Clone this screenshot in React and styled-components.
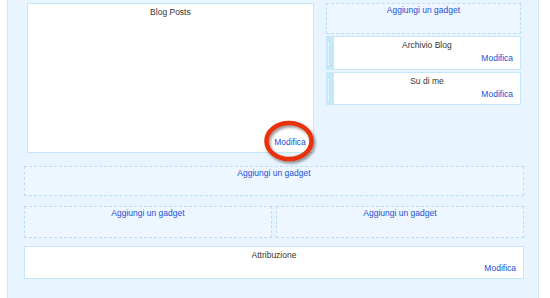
import React from "react";
import styled, { createGlobalStyle } from "styled-components";

const Global = createGlobalStyle`
  body {
    margin: 0;
    background: #ffffff;
    font-family: "Liberation Sans", Arial, sans-serif;
  }
`;

const Panel = styled.div`
  margin-left: 7px;
  width: 532px;
  height: 298px;
  box-sizing: border-box;
  background: #e8f4fe;
  border-left: 1px solid #cfe6f7;
  border-right: 1px solid #cfe6f7;
  padding: 3px 14px 0 16px;
  display: flex;
  flex-direction: column;
  overflow: hidden;
`;

const TopRow = styled.div`
  display: flex;
  padding: 0 3px;
  gap: 12px;
  position: relative;
`;

const Sidebar = styled.div`
  width: 196px;
  display: flex;
  flex-direction: column;
  gap: 2px;
`;

const Widget = styled.div`
  box-sizing: border-box;
  width: ${(p) => p.w || "auto"};
  height: ${(p) => p.h}px;
  background: #ffffff;
  border: 1px solid #c6e6fa;
  border-left-width: ${(p) => (p.handle ? 8 : 1)}px;
  position: relative;
  padding: 2px 7px 0 7px;
  font-size: 8.5px;
  line-height: 13px;
  color: #333333;
  display: flex;
  flex-direction: column;
  justify-content: ${(p) => (p.bottom ? "space-between" : "flex-start")};
  padding-bottom: ${(p) => (p.bottom ? 3 : 0)}px;
`;

const Handle = styled.span`
  position: absolute;
  left: -6px;
  top: 6px;
  height: 22px;
  border-left: 1px dotted #ffffff;
`;

const Title = styled.div`
  text-align: center;
`;

const Edit = styled.a`
  align-self: flex-end;
  color: #1d4fd3;
  text-decoration: none;
  cursor: pointer;
`;

const Gadget = styled.div`
  box-sizing: border-box;
  flex: ${(p) => (p.grow ? 1 : "none")};
  height: ${(p) => p.h}px;
  background: #eef7ff;
  border: 1px dashed #bcdcf6;
  text-align: center;
  font-size: 8.5px;
  line-height: 12px;
  color: #1d4fd3;
`;

const Row = styled.div`
  display: flex;
  gap: 4px;
  margin-top: ${(p) => p.mt}px;
`;

const Highlight = styled.svg`
  position: absolute;
  left: 235px;
  top: 112px;
  width: 60px;
  height: 52px;
  overflow: visible;
  pointer-events: none;
`;

export default function App() {
  return (
    <>
      <Global />
      <Panel>
        <TopRow>
          <Widget w="288px" h={150} bottom>
            <Title>Blog Posts</Title>
            <Edit>Modifica</Edit>
          </Widget>
          <Sidebar>
            <Gadget h={31}>Aggiungi un gadget</Gadget>
            <Widget h={34} handle>
              <Handle />
              <Title>Archivio Blog</Title>
              <Edit>Modifica</Edit>
            </Widget>
            <Widget h={33} handle>
              <Handle />
              <Title>Su di me</Title>
              <Edit>Modifica</Edit>
            </Widget>
          </Sidebar>
          <Highlight viewBox="0 0 60 52">
            <defs>
              <filter id="sh" x="-30%" y="-30%" width="160%" height="160%">
                <feDropShadow dx="1.5" dy="2" stdDeviation="1.5" floodColor="#000" floodOpacity="0.45" />
              </filter>
            </defs>
            <ellipse cx="30" cy="26" rx="22.5" ry="18" fill="none" stroke="#e8300f" strokeWidth="4.5" filter="url(#sh)" />
          </Highlight>
        </TopRow>
        <Row mt={13}>
          <Gadget grow h={30}>Aggiungi un gadget</Gadget>
        </Row>
        <Row mt={10}>
          <Gadget grow h={32}>Aggiungi un gadget</Gadget>
          <Gadget grow h={32}>Aggiungi un gadget</Gadget>
        </Row>
        <Row mt={8}>
          <Widget w="100%" h={33}>
            <Title>Attribuzione</Title>
            <Edit>Modifica</Edit>
          </Widget>
        </Row>
      </Panel>
    </>
  );
}
